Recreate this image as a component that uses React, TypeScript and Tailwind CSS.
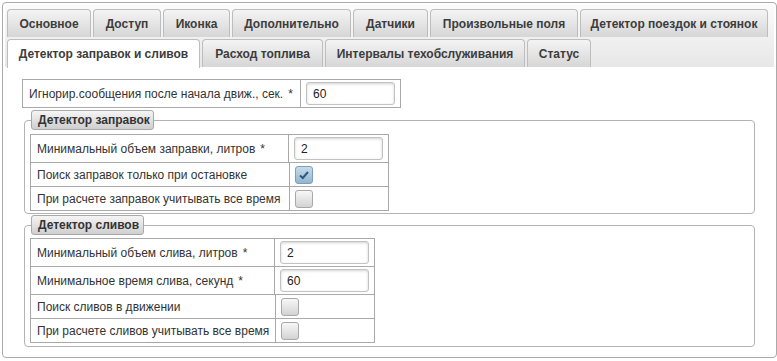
import React from 'react';

type Tab = { label: string; w: string; active?: boolean };

const topRow: Tab[] = [
  { label: 'Основное', w: 'w-[84px]' },
  { label: 'Доступ', w: 'w-[68px]' },
  { label: 'Иконка', w: 'w-[67px]' },
  { label: 'Дополнительно', w: 'w-[119px]' },
  { label: 'Датчики', w: 'w-[75px]' },
  { label: 'Произвольные поля', w: 'w-[148px]' },
  { label: 'Детектор поездок и стоянок', w: 'w-[188px]' },
];

const bottomRow: Tab[] = [
  { label: 'Детектор заправок и сливов', w: 'w-[193px]', active: true },
  { label: 'Расход топлива', w: 'w-[121px]' },
  { label: 'Интервалы техобслуживания', w: 'w-[200px]' },
  { label: 'Статус', w: 'w-[64px]' },
];

function TabItem({ tab }: { tab: Tab }) {
  return (
    <div
      className={
        tab.w +
        ' flex items-center justify-center rounded-t-[4px] border border-b-0 border-[#bdbdbd] text-[12px] font-bold text-[#3c3c3c] ' +
        (tab.active
          ? 'h-[29px] bg-white'
          : 'h-[28px] bg-gradient-to-b from-[#f4f4f4] to-[#d6d6d6]')
      }
    >
      {tab.label}
    </div>
  );
}

function TextInput({ value }: { value: string }) {
  return (
    <div className="w-[89px] h-[23px] flex items-center rounded-[3px] border border-[#c2c2c2] bg-white pl-[6px] text-[12px] text-[#222] shadow-[inset_0_1px_3px_rgba(0,0,0,0.18)]">
      {value}
    </div>
  );
}

function Checkbox({ checked }: { checked?: boolean }) {
  return (
    <div
      className={
        'w-[18px] h-[18px] rounded-[3px] border flex items-center justify-center ' +
        (checked
          ? 'border-[#7f9fb8] bg-gradient-to-b from-[#c6dbea] to-[#93b6cf]'
          : 'border-[#a8a8a8] bg-gradient-to-b from-[#f7f7f7] to-[#d3d3d3]')
      }
    >
      {checked && (
        <svg width="14" height="14" viewBox="0 0 14 14">
          <path d="M3 7.5 L5.8 10 L11 4" fill="none" stroke="#2c5b82" strokeWidth="2" />
        </svg>
      )}
    </div>
  );
}

type Row = { label: string; req?: boolean; input?: string; check?: boolean };

function FormTable({ rows, labelW, width }: { rows: Row[]; labelW: string; width: string }) {
  return (
    <div className={width + ' border-t border-l border-[#a9a9a9]'}>
      {rows.map((r) => (
        <div
          key={r.label}
          className={
            'flex border-b border-[#a9a9a9] ' + (r.input !== undefined ? 'h-[28px]' : 'h-[24px]')
          }
        >
          <div className={labelW + ' flex items-center border-r border-[#a9a9a9] pl-[6px] whitespace-nowrap'}>
            {r.label}
            {r.req && <span className="ml-[5px]">*</span>}
          </div>
          <div className="flex-1 flex items-center border-r border-[#a9a9a9] px-[5px]">
            {r.input !== undefined ? <TextInput value={r.input} /> : <Checkbox checked={r.check} />}
          </div>
        </div>
      ))}
    </div>
  );
}

function Group({ title, legendW, children, className }: { title: string; legendW: string; children: React.ReactNode; className: string }) {
  return (
    <fieldset className={'ml-[2px] w-[731px] rounded-[4px] border border-[#b3b3b3] px-[5px] ' + className}>
      <legend
        className={
          legendW +
          ' ml-[1px] h-[20px] flex items-center rounded-[3px] border border-[#a9a9a9] bg-gradient-to-b from-[#f5f5f5] to-[#cfcfcf] pl-[6px] text-[12px] font-bold text-[#333]'
        }
      >
        {title}
      </legend>
      {children}
    </fieldset>
  );
}

export default function App() {
  return (
    <div className="w-[777px] h-[361px] bg-white pt-[2px] pl-[2px] font-['Liberation_Sans',Arial,sans-serif] text-[12px] text-[#333]">
      <div className="w-[775px] h-[356px] rounded-[4px] border border-[#aaaaaa] p-[2px] flex flex-col">
        {/* tabs */}
        <div className="h-[62px] rounded-t-[3px] bg-gradient-to-b from-[#fbfbfb] to-[#e7e7e7] pt-[4px] pl-[2px] flex flex-col gap-[2px]">
          <div className="flex gap-[2px] items-start">
            {topRow.map((t) => (
              <TabItem key={t.label} tab={t} />
            ))}
          </div>
          <div className="flex gap-[2px] items-start">
            {bottomRow.map((t) => (
              <TabItem key={t.label} tab={t} />
            ))}
          </div>
        </div>

        {/* panel */}
        <div className="pl-[17px] pt-[12px]">
          <FormTable
            width="w-[379px]"
            labelW="w-[280px]"
            rows={[{ label: 'Игнорир.сообщения после начала движ., сек.', req: true, input: '60' }]}
          />

          <Group title="Детектор заправок" legendW="w-[123px]" className="mt-[2px] pt-[4px] pb-[2px]">
            <FormTable
              width="w-[359px]"
              labelW="w-[259px]"
              rows={[
                { label: 'Минимальный объем заправки, литров', req: true, input: '2' },
                { label: 'Поиск заправок только при остановке', check: true },
                { label: 'При расчете заправок учитывать все время', check: false },
              ]}
            />
          </Group>

          <Group title="Детектор сливов" legendW="w-[113px]" className="mt-[1px] pt-[3px] pb-[3px]">
            <FormTable
              width="w-[345px]"
              labelW="w-[245px]"
              rows={[
                { label: 'Минимальный объем слива, литров', req: true, input: '2' },
                { label: 'Минимальное время слива, секунд', req: true, input: '60' },
                { label: 'Поиск сливов в движении', check: false },
                { label: 'При расчете сливов учитывать все время', check: false },
              ]}
            />
          </Group>
        </div>
      </div>
    </div>
  );
}
